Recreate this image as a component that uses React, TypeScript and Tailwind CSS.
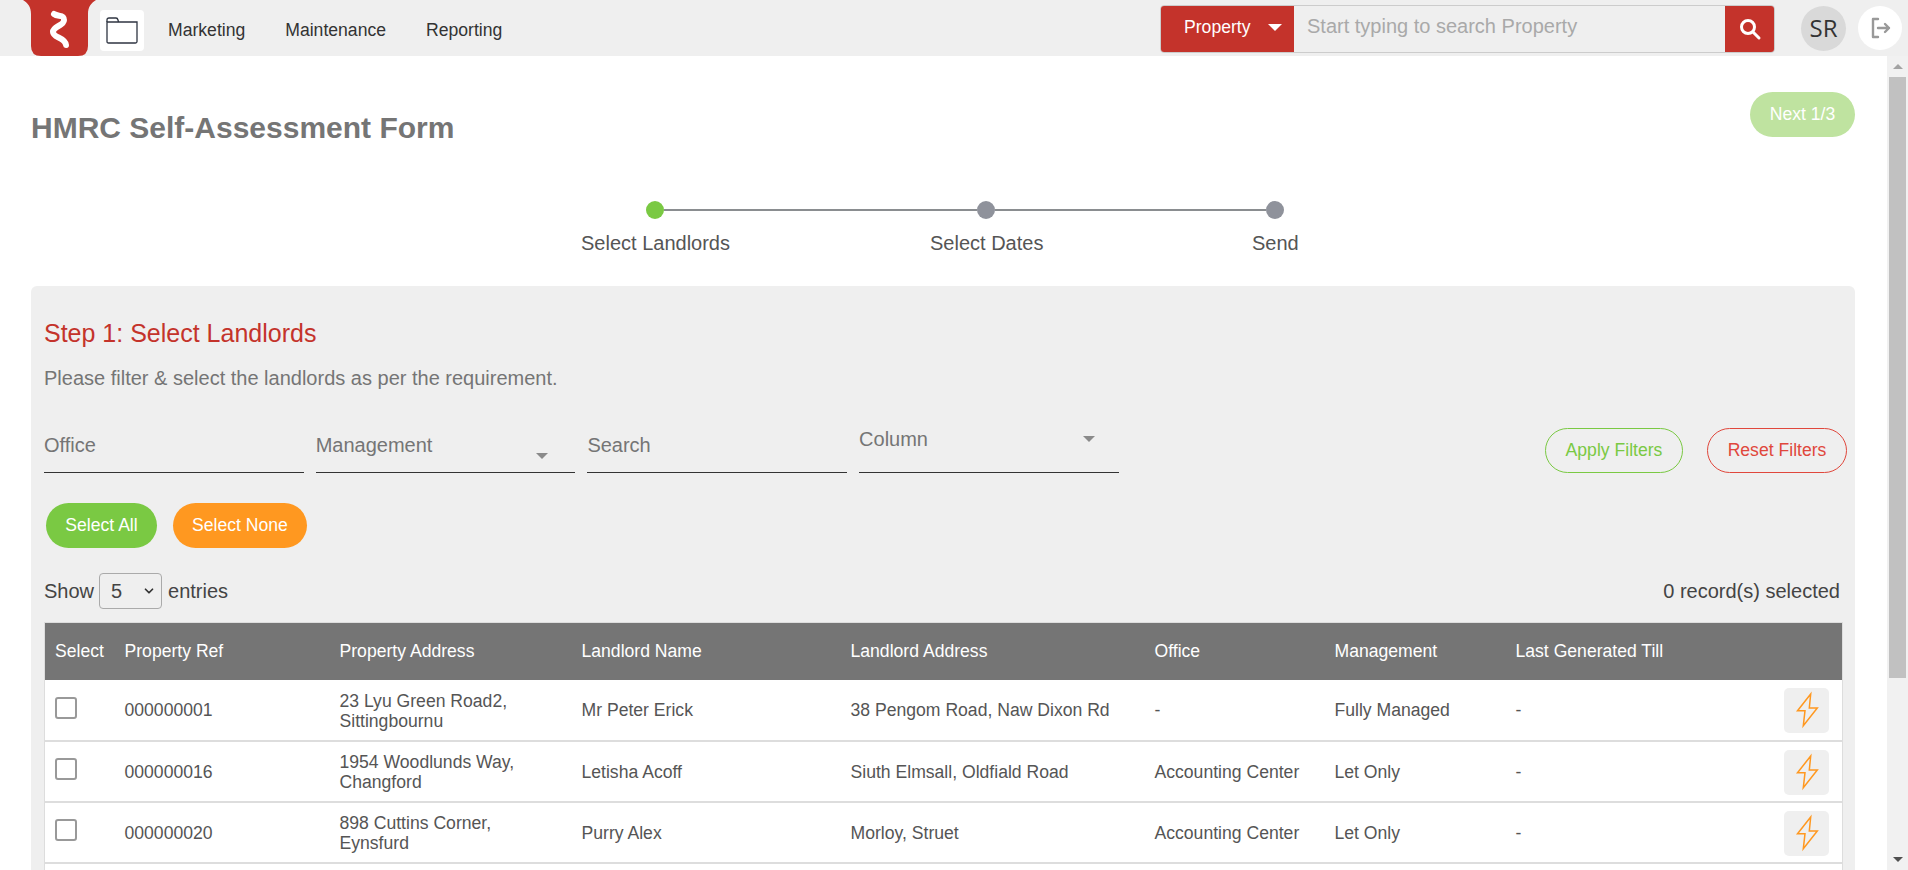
import React from "react";
import { ChevronDown } from "lucide-react";

const FONT = "font-['Liberation_Sans',Arial,sans-serif]";

const rows = [
    { ref: "000000001", address: ["23 Lyu Green Road2,", "Sittingbournu"], name: "Mr Peter Erick", landlordAddress: "38 Pengom Road, Naw Dixon Rd", office: "-", management: "Fully Managed" },
    { ref: "000000016", address: ["1954 Woodlunds Way,", "Changford"], name: "Letisha Acoff", landlordAddress: "Siuth Elmsall, Oldfiald Road", office: "Accounting Center", management: "Let Only" },
    { ref: "000000020", address: ["898 Cuttins Corner,", "Eynsfurd"], name: "Purry Alex", landlordAddress: "Morloy, Struet", office: "Accounting Center", management: "Let Only" },
];

const Caret = ({ className }: { className: string }) => (
    <span className={`w-0 h-0 border-x-[6px] border-x-transparent border-t-[6px] ${className}`} />
);

const Logo = () => (
    <svg width="76" height="56" viewBox="0 0 76 56" className="ml-[20px] shrink-0">
        <path d="M3 0H76C71 3 68 7 68 14V46Q68 56 58 56H21Q11 56 11 46V14C11 7 8 3 3 0Z" fill="#c4332b" />
        <path d="M34 14C38 17 44 14 44 20C44 26 33 26 33 32C33 38 45 37 46 45" fill="none" stroke="#fff" strokeWidth="6" strokeLinecap="round" />
    </svg>
);

const FolderTile = () => (
    <div className="w-[44px] h-[41px] ml-[4px] mt-[5px] bg-white rounded-[4px] flex items-center justify-center">
        <svg width="32" height="27" viewBox="0 0 32 27" fill="none" stroke="#2f3542" strokeWidth="1.3">
            <path d="M1 5H31V24.5Q31 26 29.5 26H2.5Q1 26 1 24.5Z" />
            <path d="M1 5V3Q1 1 3 1H10Q11.5 1 12 3L12.5 5" />
        </svg>
    </div>
);

const Field = ({ label, caret }: { label: string; caret?: boolean }) => (
    <div className="w-[259.7px] h-[44px] border-b border-[#333] relative flex items-center text-[20px] text-[#757575]">
        <span className="mt-[-12px]">{label}</span>
        {caret && <Caret className="border-t-[#8a8a8a] absolute right-[27px] top-[24px]" />}
    </div>
);

const Bolt = () => (
    <div className="w-[45px] h-[45px] bg-[#efefef] rounded-[5px]">
        <svg width="45" height="45" viewBox="0 0 45 45" fill="none" stroke="#ff9820" strokeWidth="1.5">
            <path d="M26.7 6L13.5 22.7H21L19.3 37.7L33.3 20H25.3Z" />
        </svg>
    </div>
);

export default function App() {
    return (
        <div className={`${FONT} w-[1908px] h-[870px] overflow-hidden bg-white flex flex-col`}>
            <header className="h-[56px] shrink-0 bg-[#efefef] flex items-center">
                <Logo />
                <FolderTile />
                <nav className="flex items-center ml-[24px] gap-[40px] text-[17.6px] text-[#333] mt-[4px]">
                    <span>Marketing</span>
                    <span>Maintenance</span>
                    <span>Reporting</span>
                </nav>
                <div className="ml-auto w-[615px] h-[48px] mt-[2px] flex border border-[#ccc] rounded-[4px] overflow-hidden">
                    <div className="w-[133px] bg-[#c4332b] text-white text-[17.6px] flex items-center pl-[23px] gap-[17px] pb-[3px]">
                        <span>Property</span>
                        <span className="w-0 h-0 border-x-[7px] border-x-transparent border-t-[7px] border-t-white" />
                    </div>
                    <div className="flex-1 flex items-center pl-[13px] pb-[7px] text-[20px] text-[#a9a9a9]">Start typing to search Property</div>
                    <div className="w-[49px] bg-[#c4332b] flex items-center justify-center">
                        <svg width="24" height="24" viewBox="0 0 24 24" fill="none" stroke="#fff" strokeWidth="3" strokeLinecap="round">
                            <circle cx="10" cy="10" r="6.5" />
                            <path d="M15 15L21 21" />
                        </svg>
                    </div>
                </div>
                <div className="w-[45px] h-[45px] ml-[26px] rounded-full bg-[#d9d9d9] text-[#333] text-[24px] flex items-center justify-center font-['Open_Sans',sans-serif]">SR</div>
                <div className="w-[44px] h-[44px] ml-[12px] mr-[6px] rounded-full bg-white flex items-center justify-center">
                    <svg width="24" height="24" viewBox="0 0 24 24" fill="none" stroke="#999" strokeWidth="2.4" strokeLinecap="round" strokeLinejoin="round">
                        <path d="M10 3H5V21H10" />
                        <path d="M10 12H21M17 8L21 12L17 16" />
                    </svg>
                </div>
            </header>

            <div className="flex-1 min-h-0 flex">
                <main className="flex-1 min-w-0 pl-[31px] pr-[32px]">
                    <div className="h-[112px] flex justify-between items-start">
                        <h1 className="mt-[53px] text-[30px] leading-[38px] font-bold text-[#757575]">HMRC Self-Assessment Form</h1>
                        <button className="mt-[36px] w-[105px] h-[45px] rounded-full bg-[#bfe3a0] text-white text-[17.6px]">Next 1/3</button>
                    </div>

                    <div className="h-[118px]">
                        <div className="w-[638px] ml-[615px] pt-[33px] flex items-center">
                            <span className="w-[18px] h-[18px] rounded-full bg-[#7ac943] shrink-0" />
                            <span className="w-[313px] h-[2px] bg-[#8a8d90]" />
                            <span className="w-[18px] h-[18px] rounded-full bg-[#8f929b] shrink-0" />
                            <span className="flex-1 h-[2px] bg-[#8a8d90]" />
                            <span className="w-[18px] h-[18px] rounded-full bg-[#8f929b] shrink-0" />
                        </div>
                        <div className="text-[20px] text-[#555] mt-[12px] flex leading-[24px] whitespace-nowrap">
                            <span className="ml-[550px] w-[149px]">Select Landlords</span>
                            <span className="ml-[200px] w-[113px]">Select Dates</span>
                            <span className="ml-[209px]">Send</span>
                        </div>
                    </div>

                    <section className="bg-[#efefef] rounded-t-[6px] h-[600px] pl-[13px] pr-[8px]">
                        <h2 className="pt-[32px] text-[25px] leading-[30px] text-[#c4332b]">Step 1: Select Landlords</h2>
                        <p className="mt-[17px] text-[20px] leading-[26px] text-[#757575]">Please filter &amp; select the landlords as per the requirement.</p>

                        <div className="mt-[37px] flex items-end">
                            <div className="flex gap-[12px]">
                                <Field label="Office" />
                                <Field label="Management" caret />
                                <Field label="Search" />
                                <div className="w-[259.7px] h-[44px] border-b border-[#333] relative text-[20px] text-[#757575]">
                                    <span className="block leading-[28px] mt-[-4px]">Column</span>
                                    <Caret className="border-t-[#8a8a8a] absolute right-[24px] top-[7px]" />
                                </div>
                            </div>
                            <button className="ml-auto w-[138px] h-[45px] rounded-full border border-[#7ac943] text-[#7ac943] text-[17.6px]">Apply Filters</button>
                            <button className="ml-[24px] w-[140px] h-[45px] rounded-full border border-[#e0473c] text-[#e0473c] text-[17.6px]">Reset Filters</button>
                        </div>

                        <div className="mt-[30px] ml-[2px] flex gap-[16px]">
                            <button className="w-[111px] h-[45px] rounded-full bg-[#7ac943] text-white text-[17.6px]">Select All</button>
                            <button className="w-[134px] h-[45px] rounded-full bg-[#ff9820] text-white text-[17.6px]">Select None</button>
                        </div>

                        <div className="mt-[25px] flex items-center justify-between text-[20px] text-[#444] h-[36px]">
                            <div className="flex items-center">
                                <span>Show</span>
                                <div className="ml-[5px] mr-[6px] w-[63px] h-[36px] border border-[#aaa] rounded-[4px] flex items-center justify-between pl-[11px] pr-[5px]">
                                    <span>5</span>
                                    <ChevronDown size={14} strokeWidth={3} className="text-[#333]" />
                                </div>
                                <span>entries</span>
                            </div>
                            <span className="mr-[7px]">0 record(s) selected</span>
                        </div>

                        <table className="mt-[13px] w-[1799px] table-fixed border-x border-t border-[#ddd] bg-white text-[17.6px] text-[#555] border-collapse">
                            <colgroup>
                                <col className="w-[70px]" />
                                <col className="w-[215px]" />
                                <col className="w-[242px]" />
                                <col className="w-[269px]" />
                                <col className="w-[304px]" />
                                <col className="w-[180px]" />
                                <col className="w-[181px]" />
                                <col />
                            </colgroup>
                            <thead>
                                <tr className="h-[57px] bg-[#757575] text-white text-left">
                                    {["Select", "Property Ref", "Property Address", "Landlord Name", "Landlord Address", "Office", "Management", "Last Generated Till"].map((h) => (
                                        <th key={h} className="pl-[10px] font-normal">{h}</th>
                                    ))}
                                </tr>
                            </thead>
                            <tbody>
                                {rows.map((r) => (
                                    <tr key={r.ref} className="h-[61px] border-b-2 border-[#ddd]">
                                        <td className="pl-[10px]">
                                            <span className="block w-[22px] h-[22px] mb-[4px] border-2 border-[#999] rounded-[3px] bg-white" />
                                        </td>
                                        <td className="pl-[10px] pt-[2px]">{r.ref}</td>
                                        <td className="pl-[10px] pt-[2px] leading-[20px]">{r.address[0]}<br />{r.address[1]}</td>
                                        <td className="pl-[10px] pt-[2px]">{r.name}</td>
                                        <td className="pl-[10px] pt-[2px]">{r.landlordAddress}</td>
                                        <td className="pl-[10px] pt-[2px]">{r.office}</td>
                                        <td className="pl-[10px] pt-[2px]">{r.management}</td>
                                        <td className="pl-[10px] pt-[2px]">
                                            <div className="flex items-center justify-between pr-[13px]">
                                                <span>-</span>
                                                <Bolt />
                                            </div>
                                        </td>
                                    </tr>
                                ))}
                                <tr className="h-[61px]"><td colSpan={8} /></tr>
                            </tbody>
                        </table>
                    </section>
                </main>

                <aside className="w-[21px] shrink-0 bg-[#f1f1f1] flex flex-col items-center">
                    <div className="h-[21px] flex items-center justify-center">
                        <span className="w-0 h-0 border-x-[5px] border-x-transparent border-b-[5px] border-b-[#a3a3a3]" />
                    </div>
                    <div className="w-[17px] h-[601px] bg-[#c1c1c1]" />
                    <div className="flex-1 flex items-end justify-center pb-[8px]">
                        <span className="w-0 h-0 border-x-[5px] border-x-transparent border-t-[5px] border-t-[#505050]" />
                    </div>
                </aside>
            </div>
        </div>
    );
}
